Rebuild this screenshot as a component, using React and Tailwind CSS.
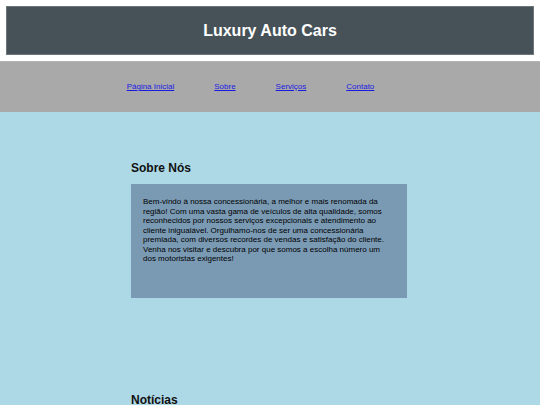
export default function App() {
  const font = { fontFamily: '"Liberation Sans", Arial, sans-serif' };
  return (
    <div className="min-h-[405px] bg-white flex flex-col" style={font}>
      <header className="mx-[6px] mt-[6px] h-[49px] bg-[#465258] border border-[#6e777c] flex items-center justify-center">
        <h1 className="text-white font-bold text-[16px] leading-none">Luxury Auto Cars</h1>
      </header>
      <nav className="mt-[6px] h-[51px] bg-[#a9a9a9] border-t border-[#b4b4b4] flex items-center justify-center gap-[40px] pr-[39px]">
        <a href="#" className="text-[8px] text-[#1a1ae0] underline">Página Inicial</a>
        <a href="#" className="text-[8px] text-[#1a1ae0] underline">Sobre</a>
        <a href="#" className="text-[8px] text-[#1a1ae0] underline">Serviços</a>
        <a href="#" className="text-[8px] text-[#1a1ae0] underline">Contato</a>
      </nav>
      <main className="flex-1 bg-[#add8e6]">
        <div className="w-[278px] mx-auto pr-[2px] pt-[49px]">
          <section>
            <h2 className="text-[12px] leading-[14px] font-bold text-[#111]">Sobre Nós</h2>
            <div className="mt-[9px] h-[114px] bg-[#7a9ab4] px-[12px] pt-[13px]">
              <p className="text-[8px] leading-[9.5px] text-black">
                Bem-vindo à nossa concessionária, a melhor e mais renomada da região! Com uma vasta gama de veículos de alta qualidade, somos reconhecidos por nossos serviços excepcionais e atendimento ao cliente inigualável. Orgulhamo-nos de ser uma concessionária premiada, com diversos recordes de vendas e satisfação do cliente. Venha nos visitar e descubra por que somos a escolha número um dos motoristas exigentes!
              </p>
            </div>
          </section>
          <section className="mt-[95px]">
            <h2 className="text-[12px] leading-[14px] font-bold text-[#111]">Notícias</h2>
          </section>
        </div>
      </main>
    </div>
  );
}
